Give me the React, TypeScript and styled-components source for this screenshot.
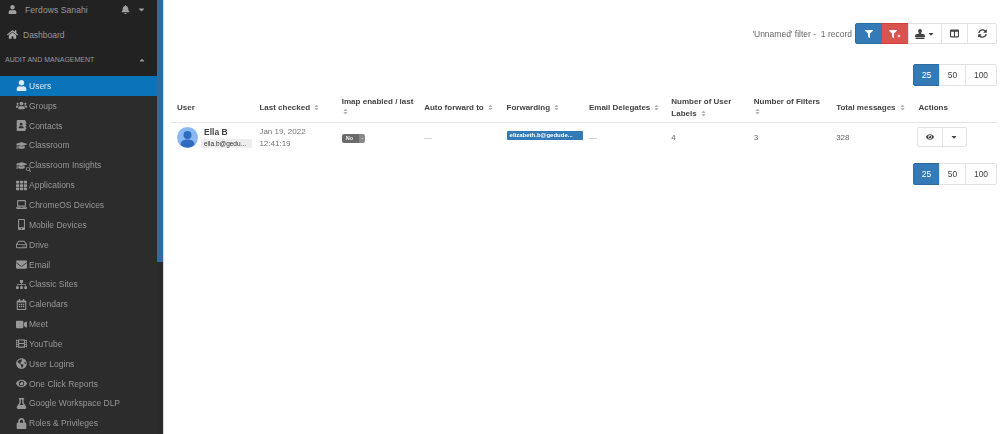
import React from 'react';
import styled, { createGlobalStyle } from 'styled-components';
import {
  FaUser, FaBell, FaCaretDown, FaCaretUp, FaHome, FaUsers, FaAddressBook, FaGraduationCap, FaTh, FaLaptop,
  FaMobileAlt, FaRegHdd, FaEnvelope, FaSitemap, FaRegCalendarAlt, FaVideo, FaFilm, FaGlobeAmericas, FaEye, FaFlask,
  FaLock, FaFilter, FaStamp, FaColumns, FaSyncAlt, FaSort, FaTimes, FaSearch,
} from 'react-icons/fa';

const GlobalStyle = createGlobalStyle`
  html, body { margin: 0; padding: 0; background: #fff; }
  body { font-family: "Liberation Sans", Arial, sans-serif; overflow: hidden; }
`;

const Page = styled.div`
  display: flex;
  width: 1000px;
  height: 434px;
  overflow: hidden;
  filter: blur(0.35px);
`;

const Sidebar = styled.aside`
  width: 157px;
  flex-shrink: 0;
  background: #2c2c2c;
  color: #999;
  font-size: 8.5px;
  display: flex;
  flex-direction: column;
`;

const SidebarTop = styled.div`
  background: #222;
  height: 76px;
  display: flex;
  flex-direction: column;
`;

const Profile = styled.div`
  height: 19px;
  display: flex;
  align-items: center;
  padding: 0 11px 2px 8px;
  letter-spacing: 0.1px;
  svg { font-size: 9px; color: #a0a0a0; }
  span { margin-left: 8px; flex: 1; }
`;

const DashboardLink = styled.div`
  height: 27px;
  display: flex;
  align-items: center;
  padding-left: 7px;
  span { margin-left: 5px; }
  svg { font-size: 11px; color: #aaa; }
`;

const SectionTitle = styled.div`
  height: 25px;
  padding: 0 11px 2px 5px;
  box-sizing: border-box;
  display: flex;
  align-items: center;
  justify-content: space-between;
  font-size: 7px;
  color: #999;
  svg { font-size: 8px; }
`;

const NavRow = styled.div<{ $active?: boolean }>`
  height: 19.85px;
  flex-shrink: 0;
  display: flex;
  align-items: center;
  padding-left: 13px;
  color: ${p => (p.$active ? '#dfeaf3' : '#979797')};
  background: ${p => (p.$active ? '#0a74bb' : 'transparent')};
`;

const NavIcon = styled.span`
  width: 16px;
  height: 11px;
  display: flex;
  align-items: center;
  justify-content: center;
  font-size: 11px;
  position: relative;
`;

const SmallSearch = styled(FaSearch)`
  position: absolute;
  right: -2px;
  bottom: -1px;
  font-size: 5px;
`;

const Rail = styled.div`
  width: 7px;
  flex-shrink: 0;
  background: #2a2a2a;
  border-right: 1px solid #d9d9d9;
  box-sizing: border-box;
`;

const RailThumb = styled.div`
  height: 262px;
  background: #2f6aa1;
`;

const Main = styled.main`
  flex: 1;
  padding: 23px 3px 0 7px;
  display: flex;
  flex-direction: column;
  color: #555;
  font-size: 8.5px;
`;

const Toolbar = styled.div`
  display: flex;
  justify-content: flex-end;
  align-items: center;
  height: 21px;
`;

const FilterInfo = styled.span`
  font-size: 8.5px;
  color: #666;
  margin-right: 3px;
  white-space: pre;
`;

const ButtonGroup = styled.div`
  display: flex;
`;

const GroupButton = styled.div<{ $width: number; $tone?: 'blue' | 'red'; $height?: number }>`
  width: ${p => p.$width}px;
  height: ${p => p.$height ?? 21}px;
  box-sizing: border-box;
  display: flex;
  align-items: center;
  justify-content: center;
  gap: 2px;
  font-size: 8.5px;
  color: ${p => (p.$tone ? '#fff' : '#444')};
  background: ${p => (p.$tone === 'blue' ? '#337ab7' : p.$tone === 'red' ? '#d9534f' : '#fff')};
  border: 1px solid ${p => (p.$tone === 'blue' ? '#2e6da4' : p.$tone === 'red' ? '#d43f3a' : '#e2e2e2')};
  margin-left: -1px;
  position: relative;
  &:first-child { border-radius: 2px 0 0 2px; margin-left: 0; }
  &:last-child { border-radius: 0 2px 2px 0; }
`;

const ClearMark = styled(FaTimes)`
  font-size: 4px;
  margin: 4px 0 0 -2px;
`;

const PagerRow = styled.div<{ $top: number }>`
  display: flex;
  justify-content: flex-end;
  margin-top: ${p => p.$top}px;
`;

const TableHead = styled.div`
  display: grid;
  grid-template-columns: repeat(10, 82.4px);
  margin-top: 10px;
  height: 27px;
  box-sizing: border-box;
  padding-bottom: 5px;
  border-bottom: 1px solid #e4e4e4;
  font-weight: bold;
  font-size: 8px;
  color: #444;
`;

const HeadCell = styled.div<{ $tall?: boolean }>`
  padding: 0 0 0 6px;
  line-height: 12px;
  align-self: ${p => (p.$tall ? 'start' : 'center')};
  svg { font-size: 7px; color: #b4b4b4; vertical-align: -1px; margin-left: 3px; }
`;

const SortLine = styled.div`
  line-height: 5px;
  svg { margin-left: 0; vertical-align: 2px; }
`;

const TableRow = styled.div`
  display: grid;
  grid-template-columns: repeat(10, 82.4px);
  align-items: center;
  height: 28px;
  font-size: 8px;
  color: #666;
`;

const Cell = styled.div`
  padding: 0 6px;
`;

const UserCell = styled.div`
  padding-left: 6px;
  display: flex;
  align-items: center;
  gap: 3px;
  white-space: nowrap;
`;

const AvatarCircle = styled.svg`
  width: 21px;
  height: 21px;
  flex-shrink: 0;
`;

const UserName = styled.div`
  font-size: 8.5px;
  font-weight: bold;
  color: #444;
  margin-left: 3px;
`;

const EmailChip = styled.div`
  background: #eee;
  color: #333;
  font-size: 6.5px;
  line-height: 9px;
  padding: 0 4px 0 3px;
  margin-top: 2px;
  border-radius: 1px;
  width: 44px;
`;

const DateCell = styled(Cell)`
  line-height: 12px;
  color: #777;
  margin-top: 1px;
`;

const ImapBadge = styled.div`
  display: inline-flex;
  height: 9px;
  font-size: 5.5px;
  font-weight: bold;
  line-height: 9px;
  color: #eee;
  margin-top: 2px;
  span { background: #6b6b6b; padding: 0 6px 0 4px; border-radius: 2px 0 0 2px; }
  i { background: #888; padding: 0 2px; border-radius: 0 2px 2px 0; font-style: normal; }
`;

const ForwardChip = styled.div`
  width: 76px;
  box-sizing: border-box;
  background: #337ab7;
  color: #fff;
  font-size: 6px;
  font-weight: bold;
  line-height: 9px;
  border-radius: 1px;
  padding-left: 3px;
  white-space: nowrap;
  overflow: hidden;
  margin-top: -3px;
`;

const Dash = styled.span`
  color: #aaa;
`;

const ActionGroup = styled.div`
  display: flex;
  padding-left: 4px;
`;

const ActionButton = styled.div<{ $width: number }>`
  width: ${p => p.$width}px;
  height: 20px;
  box-sizing: border-box;
  border: 1px solid #e2e2e2;
  margin-left: -1px;
  display: flex;
  align-items: center;
  justify-content: center;
  font-size: 8px;
  color: #444;
  &:first-child { margin-left: 0; border-radius: 2px 0 0 2px; }
  &:last-child { border-radius: 0 2px 2px 0; }
`;

const navItems: { label: string; icon: React.ReactNode; active?: boolean }[] = [
  { label: 'Users', icon: <FaUser />, active: true },
  { label: 'Groups', icon: <FaUsers /> },
  { label: 'Contacts', icon: <FaAddressBook /> },
  { label: 'Classroom', icon: <FaGraduationCap /> },
  { label: 'Classroom Insights', icon: <><FaGraduationCap /><SmallSearch /></> },
  { label: 'Applications', icon: <FaTh /> },
  { label: 'ChromeOS Devices', icon: <FaLaptop /> },
  { label: 'Mobile Devices', icon: <FaMobileAlt /> },
  { label: 'Drive', icon: <FaRegHdd /> },
  { label: 'Email', icon: <FaEnvelope /> },
  { label: 'Classic Sites', icon: <FaSitemap /> },
  { label: 'Calendars', icon: <FaRegCalendarAlt /> },
  { label: 'Meet', icon: <FaVideo /> },
  { label: 'YouTube', icon: <FaFilm /> },
  { label: 'User Logins', icon: <FaGlobeAmericas /> },
  { label: 'One Click Reports', icon: <FaEye /> },
  { label: 'Google Workspace DLP', icon: <FaFlask /> },
  { label: 'Roles & Privileges', icon: <FaLock /> },
];

const Pager = () => (
  <ButtonGroup>
    <GroupButton $width={27} $height={22} $tone="blue">25</GroupButton>
    <GroupButton $width={27} $height={22}>50</GroupButton>
    <GroupButton $width={32} $height={22}>100</GroupButton>
  </ButtonGroup>
);

const Head = ({ label }: { label: string }) => (
  <HeadCell>{label}<FaSort /></HeadCell>
);

const App: React.FC = () => (
  <Page>
    <GlobalStyle />
    <Sidebar>
      <SidebarTop>
        <Profile>
          <FaUser /><span>Ferdows Sanahi</span><FaBell /><FaCaretDown style={{ marginLeft: 7 }} />
        </Profile>
        <DashboardLink><FaHome /><span>Dashboard</span></DashboardLink>
        <SectionTitle>AUDIT AND MANAGEMENT<FaCaretUp /></SectionTitle>
      </SidebarTop>
      {navItems.map(item => (
        <NavRow key={item.label} $active={item.active}>
          <NavIcon>{item.icon}</NavIcon>{item.label}
        </NavRow>
      ))}
    </Sidebar>
    <Rail><RailThumb /></Rail>
    <Main>
      <Toolbar>
        <FilterInfo>'Unnamed' filter -  1 record</FilterInfo>
        <ButtonGroup>
          <GroupButton $width={27} $tone="blue"><FaFilter size={8} /></GroupButton>
          <GroupButton $width={28} $tone="red"><FaFilter size={8} /><ClearMark /></GroupButton>
          <GroupButton $width={34}><FaStamp size={10} /><FaCaretDown size={8} /></GroupButton>
          <GroupButton $width={27}><FaColumns size={9} /></GroupButton>
          <GroupButton $width={30}><FaSyncAlt size={9} /></GroupButton>
        </ButtonGroup>
      </Toolbar>
      <PagerRow $top={20}><Pager /></PagerRow>
      <TableHead>
        <HeadCell>User</HeadCell>
        <Head label="Last checked" />
        <HeadCell $tall>Imap enabled / last<SortLine><FaSort /></SortLine></HeadCell>
        <Head label="Auto forward to" />
        <Head label="Forwarding" />
        <Head label="Email Delegates" />
        <HeadCell $tall>Number of User Labels<FaSort /></HeadCell>
        <HeadCell $tall>Number of Filters<SortLine><FaSort /></SortLine></HeadCell>
        <Head label="Total messages" />
        <HeadCell>Actions</HeadCell>
      </TableHead>
      <TableRow>
        <UserCell>
          <AvatarCircle viewBox="0 0 21 21">
            <circle cx="10.5" cy="10.5" r="10.5" fill="#8ab8f5" />
            <circle cx="10.5" cy="8" r="4" fill="#2f6cc0" />
            <path d="M3.5 18c0-4 3-5.5 7-5.5s7 1.500 7 5.500a10.500 10.500 0 0 1-14 0z" fill="#2f6cc0" />
          </AvatarCircle>
          <div>
            <UserName>Ella B</UserName>
            <EmailChip>ella.b@gedu...</EmailChip>
          </div>
        </UserCell>
        <DateCell>Jan 19, 2022<br />12:41:19</DateCell>
        <Cell><ImapBadge><span>No</span><i>-</i></ImapBadge></Cell>
        <Cell><Dash>—</Dash></Cell>
        <Cell><ForwardChip>elizabeth.b@gedude...</ForwardChip></Cell>
        <Cell><Dash>—</Dash></Cell>
        <Cell>4</Cell>
        <Cell>3</Cell>
        <Cell>328</Cell>
        <ActionGroup>
          <ActionButton $width={26}><FaEye /></ActionButton>
          <ActionButton $width={25}><FaCaretDown /></ActionButton>
        </ActionGroup>
      </TableRow>
      <PagerRow $top={12}><Pager /></PagerRow>
    </Main>
  </Page>
);

export default App;
